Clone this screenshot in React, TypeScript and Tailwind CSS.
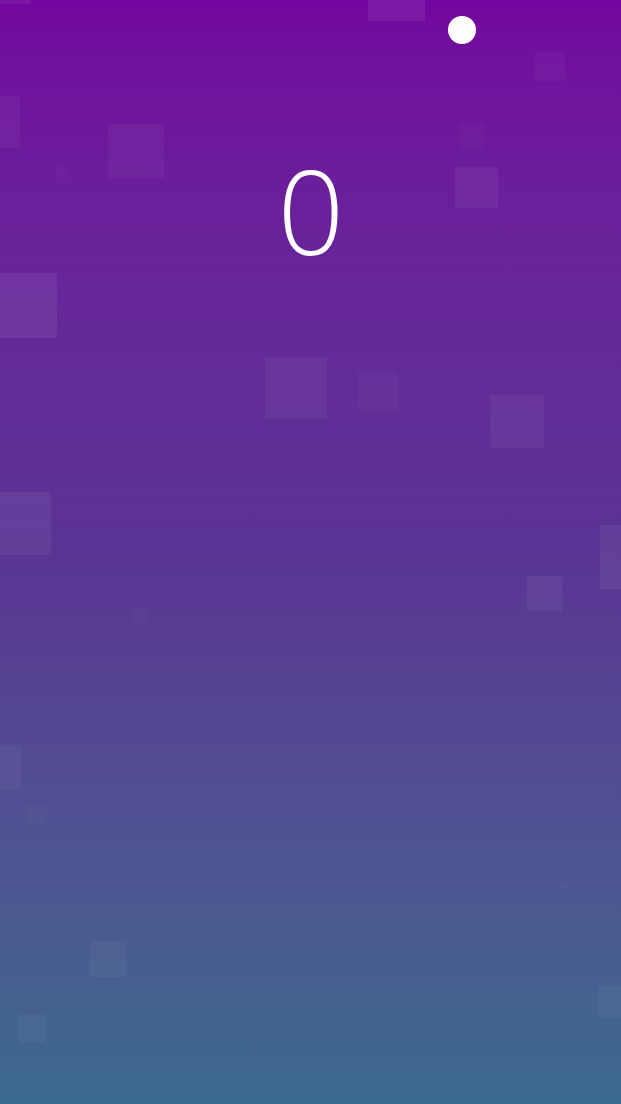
import React from 'react';

interface Square {
  x: number;
  y: number;
  w: number;
  h: number;
  o: number;
}

// floating background particles (positions are the content of the canvas)
const squares: Square[] = [
  { x: 0, y: 0, w: 31, h: 4, o: 0.07 },
  { x: 368, y: 0, w: 57, h: 21, o: 0.07 },
  { x: 535, y: 52, w: 30, h: 29, o: 0.03 },
  { x: 0, y: 96, w: 20, h: 52, o: 0.04 },
  { x: 108, y: 124, w: 56, h: 54, o: 0.04 },
  { x: 56, y: 165, w: 12, h: 12, o: 0.02 },
  { x: 459, y: 124, w: 26, h: 26, o: 0.02 },
  { x: 455, y: 167, w: 43, h: 41, o: 0.05 },
  { x: 0, y: 273, w: 57, h: 65, o: 0.07 },
  { x: 265, y: 357, w: 62, h: 62, o: 0.05 },
  { x: 358, y: 372, w: 40, h: 39, o: 0.03 },
  { x: 490, y: 395, w: 54, h: 53, o: 0.05 },
  { x: 0, y: 492, w: 51, h: 63, o: 0.06 },
  { x: 600, y: 525, w: 21, h: 64, o: 0.06 },
  { x: 527, y: 576, w: 35, h: 35, o: 0.05 },
  { x: 133, y: 607, w: 15, h: 15, o: 0.02 },
  { x: 0, y: 746, w: 21, h: 44, o: 0.04 },
  { x: 26, y: 804, w: 20, h: 19, o: 0.02 },
  { x: 558, y: 884, w: 8, h: 5, o: 0.02 },
  { x: 90, y: 941, w: 36, h: 36, o: 0.04 },
  { x: 18, y: 1015, w: 28, h: 28, o: 0.04 },
  { x: 598, y: 986, w: 23, h: 32, o: 0.04 },
];

export default function App() {
  return (
    <div className="relative w-full h-[1104px] overflow-hidden bg-gradient-to-b from-[#73069f] via-[#5a3494] to-[#3b6a8e]">
      {squares.map((s, i) => (
        <div
          key={i}
          className="absolute bg-white"
          style={{ left: s.x, top: s.y, width: s.w, height: s.h, opacity: s.o }}
        />
      ))}

      {/* ball */}
      <div className="absolute left-[448px] top-[16px] w-[28px] h-[28px] rounded-full bg-white" />

      {/* score */}
      <div className="relative flex justify-center pt-[151px]">
        <span
          className="text-white font-[350] leading-none text-[117px] pl-[1px]"
          style={{ fontFamily: '"Open Sans", sans-serif' }}
        >
          0
        </span>
      </div>
    </div>
  );
}
